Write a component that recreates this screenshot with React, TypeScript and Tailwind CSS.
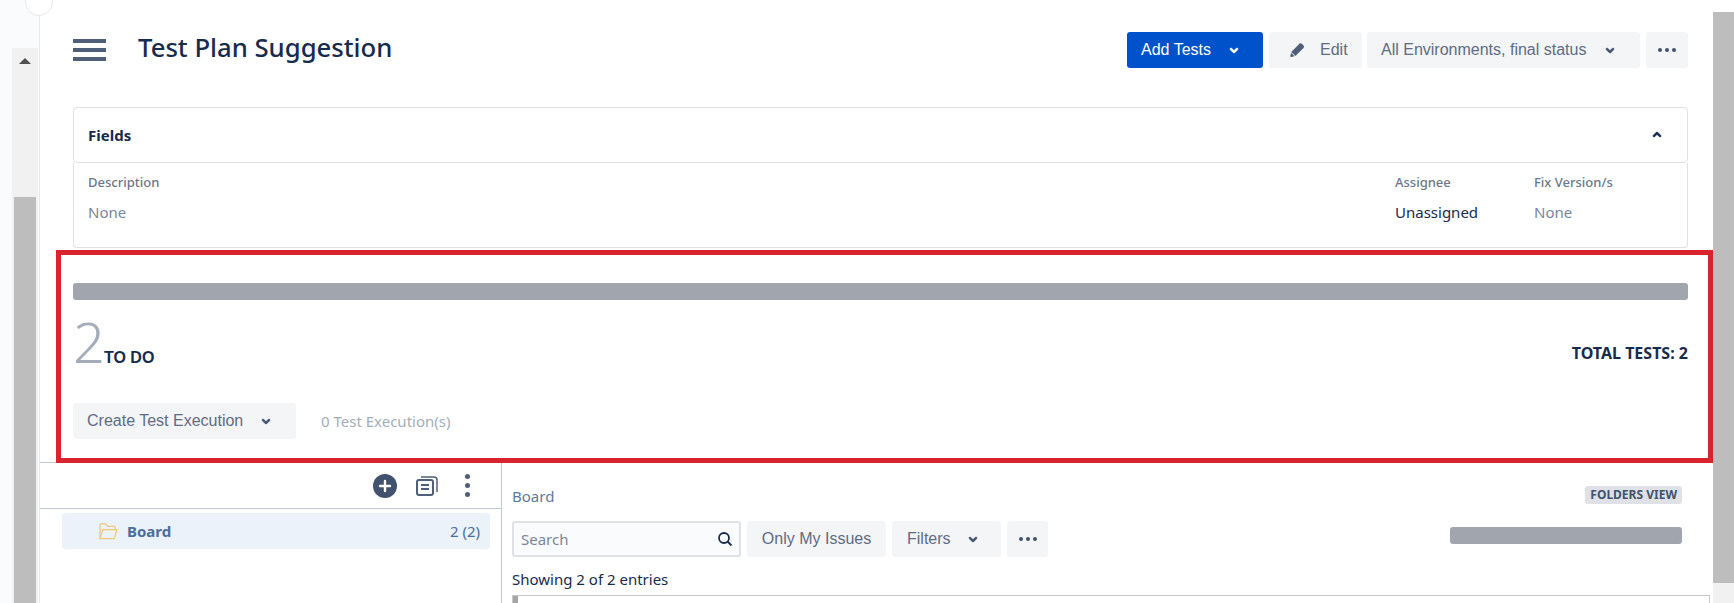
import React from "react";

const Chevron = ({ up = false }: { up?: boolean }) => (
  <svg viewBox="0 0 24 24" className={`w-6 h-6 shrink-0 ${up ? "rotate-180" : ""}`} fill="currentColor" stroke="currentColor" strokeWidth="0.6">
    <path d="M8.292 10.293a1.009 1.009 0 000 1.419l2.939 2.965c.218.215.5.322.779.322s.556-.107.769-.322l2.93-2.955a1.01 1.01 0 000-1.419.987.987 0 00-1.406 0l-2.298 2.317-2.307-2.327a.99.99 0 00-1.406 0z" />
  </svg>
);

const Dots = () => (
  <svg viewBox="0 0 24 24" className="w-6 h-6" fill="#42526e">
    <circle cx="5" cy="12" r="2" />
    <circle cx="12" cy="12" r="2" />
    <circle cx="19" cy="12" r="2" />
  </svg>
);

const GreyButton = ({ className, children }: { className: string; children: React.ReactNode }) => (
  <div className={`flex items-center h-9 rounded-[3px] bg-[#f4f5f7] text-[#5e6c84] text-base font-['Liberation_Sans',Arial,sans-serif] ${className}`}>
    {children}
  </div>
);

const Header = () => (
  <div className="flex items-center h-9 mt-8 pl-[33px] pr-[25px]">
    <div className="flex flex-col gap-[5px] w-[33px]">
      <div className="h-1 bg-[#505f79]" />
      <div className="h-1 bg-[#505f79]" />
      <div className="h-1 bg-[#505f79]" />
    </div>
    <h1 className="ml-[32px] -mt-[4px] text-[25.7px] font-medium text-[#172b4d] leading-9">Test Plan Suggestion</h1>
    <div className="ml-auto flex">
      <div className="flex items-center h-9 w-[136px] pl-[14px] rounded-[3px] bg-[#0052cc] text-white text-base font-['Liberation_Sans',Arial,sans-serif]">
        Add Tests
        <span className="ml-[11px]"><Chevron /></span>
      </div>
      <GreyButton className="ml-[6px] w-[93px] pl-[18px]">
        <svg viewBox="0 0 24 24" className="w-5 h-5" fill="#505f79">
          <path d="M4.020 19.230a1 1 0 001.180 1.180l3.810-.780-4.210-4.210-.780 3.810zM19.844 6.707l-2.120-2.122A1.997 1.997 0 0016.308 4c-.512 0-1.024.195-1.415.585l-9.757 9.758 4.950 4.950 9.757-9.758a2 2 0 000-2.828z" />
        </svg>
        <span className="ml-[13px]">Edit</span>
      </GreyButton>
      <GreyButton className="ml-[5px] w-[273px] pl-[14px]">
        All Environments, final status
        <span className="ml-[12px] text-[#42526e]"><Chevron /></span>
      </GreyButton>
      <GreyButton className="ml-[6px] w-[42px] justify-center"><Dots /></GreyButton>
    </div>
  </div>
);

const Fields = () => (
  <div className="mt-[39px] ml-[33px] mr-[25px]">
    <div className="flex items-center justify-between h-14 pl-[14px] pr-[18px] border border-[#dfe1e6] rounded-[4px] text-[#172b4d]">
      <span className="text-[15px] font-bold">Fields</span>
      <Chevron up />
    </div>
    <div className="flex h-[85px] pl-[14px] pt-[9px] border border-t-0 border-[#dfe1e6] rounded-b-[4px] text-[15px]">
      <div className="w-[1307px]">
        <div className="text-[13px] font-medium leading-5 text-[#6b778c]">Description</div>
        <div className="mt-[10px] leading-5 text-[#7a869a]">None</div>
      </div>
      <div className="w-[139px]">
        <div className="text-[13px] font-medium leading-5 text-[#6b778c]">Assignee</div>
        <div className="mt-[10px] leading-5 text-[#172b4d]">Unassigned</div>
      </div>
      <div>
        <div className="text-[13px] font-medium leading-5 text-[#6b778c]">Fix Version/s</div>
        <div className="mt-[10px] leading-5 text-[#7a869a]">None</div>
      </div>
    </div>
  </div>
);

const Summary = () => (
  <div className="flex mt-[2px]">
    <div className="w-4 border-b border-[#c1c7d0]" />
    <div className="flex-1 h-[213px] border-[5px] border-[#d9232e] pl-3 pr-5 pt-[28px]">
      <div className="h-[17px] rounded-[3px] bg-[#a0a5ae]" />
      <div className="flex items-end justify-between h-[74px]">
        <div className="flex items-baseline">
          <span className="text-[56px] font-light leading-[66px] text-[#a5adba]">2</span>
          <span className="-ml-[1px] text-base font-bold text-[#172b4d] font-['Liberation_Sans',Arial,sans-serif]">TO DO</span>
        </div>
        <span className="mb-[9px] text-base font-bold leading-6 text-[#172b4d]">TOTAL TESTS: 2</span>
      </div>
      <div className="flex items-center mt-[29px]">
        <GreyButton className="w-[223px] pl-[14px]">
          Create Test Execution
          <span className="ml-[11px] text-[#42526e]"><Chevron /></span>
        </GreyButton>
        <span className="ml-[25px] text-[15px] text-[#a5adba]">0 Test Execution(s)</span>
      </div>
    </div>
  </div>
);

const TreePanel = () => (
  <div className="w-[462px] border-r border-[#c1c7d0]">
    <div className="flex items-center h-[46px] pl-[333px] border-b border-[#c1c7d0]">
      <svg viewBox="0 0 24 24" className="w-6 h-6">
        <circle cx="12" cy="12" r="12" fill="#42526e" />
        <path d="M12 7v10M7 12h10" stroke="#fff" strokeWidth="2.400" strokeLinecap="round" />
      </svg>
      <svg viewBox="0 0 22 22" className="ml-[19px] w-[22px] h-[22px]" fill="none" stroke="#505f79">
        <rect x="1" y="5" width="16" height="15" rx="2" strokeWidth="2" />
        <path d="M5 10h8M5 14h8" strokeWidth="2" />
        <path d="M5 2h13a3 3 0 013 3v12" strokeWidth="1.500" />
      </svg>
      <div className="ml-[27px] flex flex-col gap-[4px]">
        <div className="w-[5px] h-[5px] rounded-full bg-[#505f79]" />
        <div className="w-[5px] h-[5px] rounded-full bg-[#505f79]" />
        <div className="w-[5px] h-[5px] rounded-full bg-[#505f79]" />
      </div>
    </div>
    <div className="flex items-center h-9 mt-[4px] ml-[22px] mr-[11px] pl-[37px] pr-[10px] rounded-[3px] bg-[#ebf2f9] text-[15px] text-[#4a6f9f]">
      <svg viewBox="0 0 20 18" className="w-[19px] h-[17px]" fill="none" stroke="#edc77d" strokeWidth="1.300">
        <path d="M1 16.500V2a1 1 0 011-1h5l2 2.500h7a1 1 0 011 1V7" />
        <path d="M1 16.500l3-9.500h15l-3 9.500z" />
      </svg>
      <span className="ml-[9px] font-bold">Board</span>
      <span className="ml-auto">2 (2)</span>
    </div>
  </div>
);

const ListPanel = () => (
  <div className="flex-1 pl-[10px] pr-[3px]">
    <div className="flex items-center justify-between h-[23px] mt-[22px] pr-[28px]">
      <span className="text-[15px] text-[#5b7a9d]">Board</span>
      <span className="h-[18px] -mt-[3px] px-[5px] rounded-[3px] bg-[#dfe1e6] text-xs font-bold leading-[18px] text-[#42526e]">FOLDERS VIEW</span>
    </div>
    <div className="flex items-start justify-between mt-[13px] pr-[28px]">
      <div className="flex gap-[6px]">
        <div className="flex items-center justify-between w-[229px] h-9 pl-[7px] pr-[6px] border-2 border-[#dfe1e6] rounded-[3px] bg-[#fafbfc] text-[15px] text-[#7a869a]">
          Search
          <svg viewBox="0 0 16 16" className="w-4 h-4" fill="none" stroke="#172b4d" strokeWidth="1.800">
            <circle cx="7" cy="7" r="5" />
            <path d="M10.500 10.500L14.500 14.500" />
          </svg>
        </div>
        <GreyButton className="w-[139px] justify-center">Only My Issues</GreyButton>
        <GreyButton className="w-[109px] pl-[15px]">
          Filters
          <span className="ml-[10px] text-[#42526e]"><Chevron /></span>
        </GreyButton>
        <GreyButton className="w-[41px] justify-center"><Dots /></GreyButton>
      </div>
      <div className="w-[232px] h-[17px] mt-[6px] rounded-[3px] bg-[#a0a5ae]" />
    </div>
    <div className="mt-[12px] text-[15px] leading-5 text-[#172b4d]">Showing 2 of 2 entries</div>
    <div className="mt-[6px] h-2 border-t border-x border-[#c8c8c8]">
      <div className="w-[5px] h-2 bg-[#a5a5a5]" />
    </div>
  </div>
);

export default function App() {
  return (
    <div className="flex w-[1734px] h-[603px] overflow-hidden bg-white font-['Noto_Sans',sans-serif]">
      <aside className="relative w-10 shrink-0 pt-[48px] pl-3 border-r border-[#e6e8eb] bg-[#f9fbfd]">
        <div className="absolute -top-[12px] -right-[14px] w-[28px] h-[28px] rounded-full border border-[#e6e8eb] bg-white" />
        <div className="h-full w-[26px] px-[2px] bg-[#f1f1f1]">
          <div className="flex justify-center h-[149px] pt-[10px]">
            <div className="w-0 h-0 border-x-[6px] border-x-transparent border-b-[6px] border-b-[#505050]" />
          </div>
          <div className="h-full bg-[#bdbdbd]" />
        </div>
      </aside>
      <main className="flex-1 min-w-0">
        <Header />
        <Fields />
        <Summary />
        <div className="flex h-[140px]">
          <TreePanel />
          <ListPanel />
        </div>
      </main>
      <div className="w-[21px] shrink-0 pt-3 bg-white">
        <div className="h-[571px] bg-[#bdbdbd]" />
        <div className="h-5 bg-[#f1f1f1]" />
      </div>
    </div>
  );
}
